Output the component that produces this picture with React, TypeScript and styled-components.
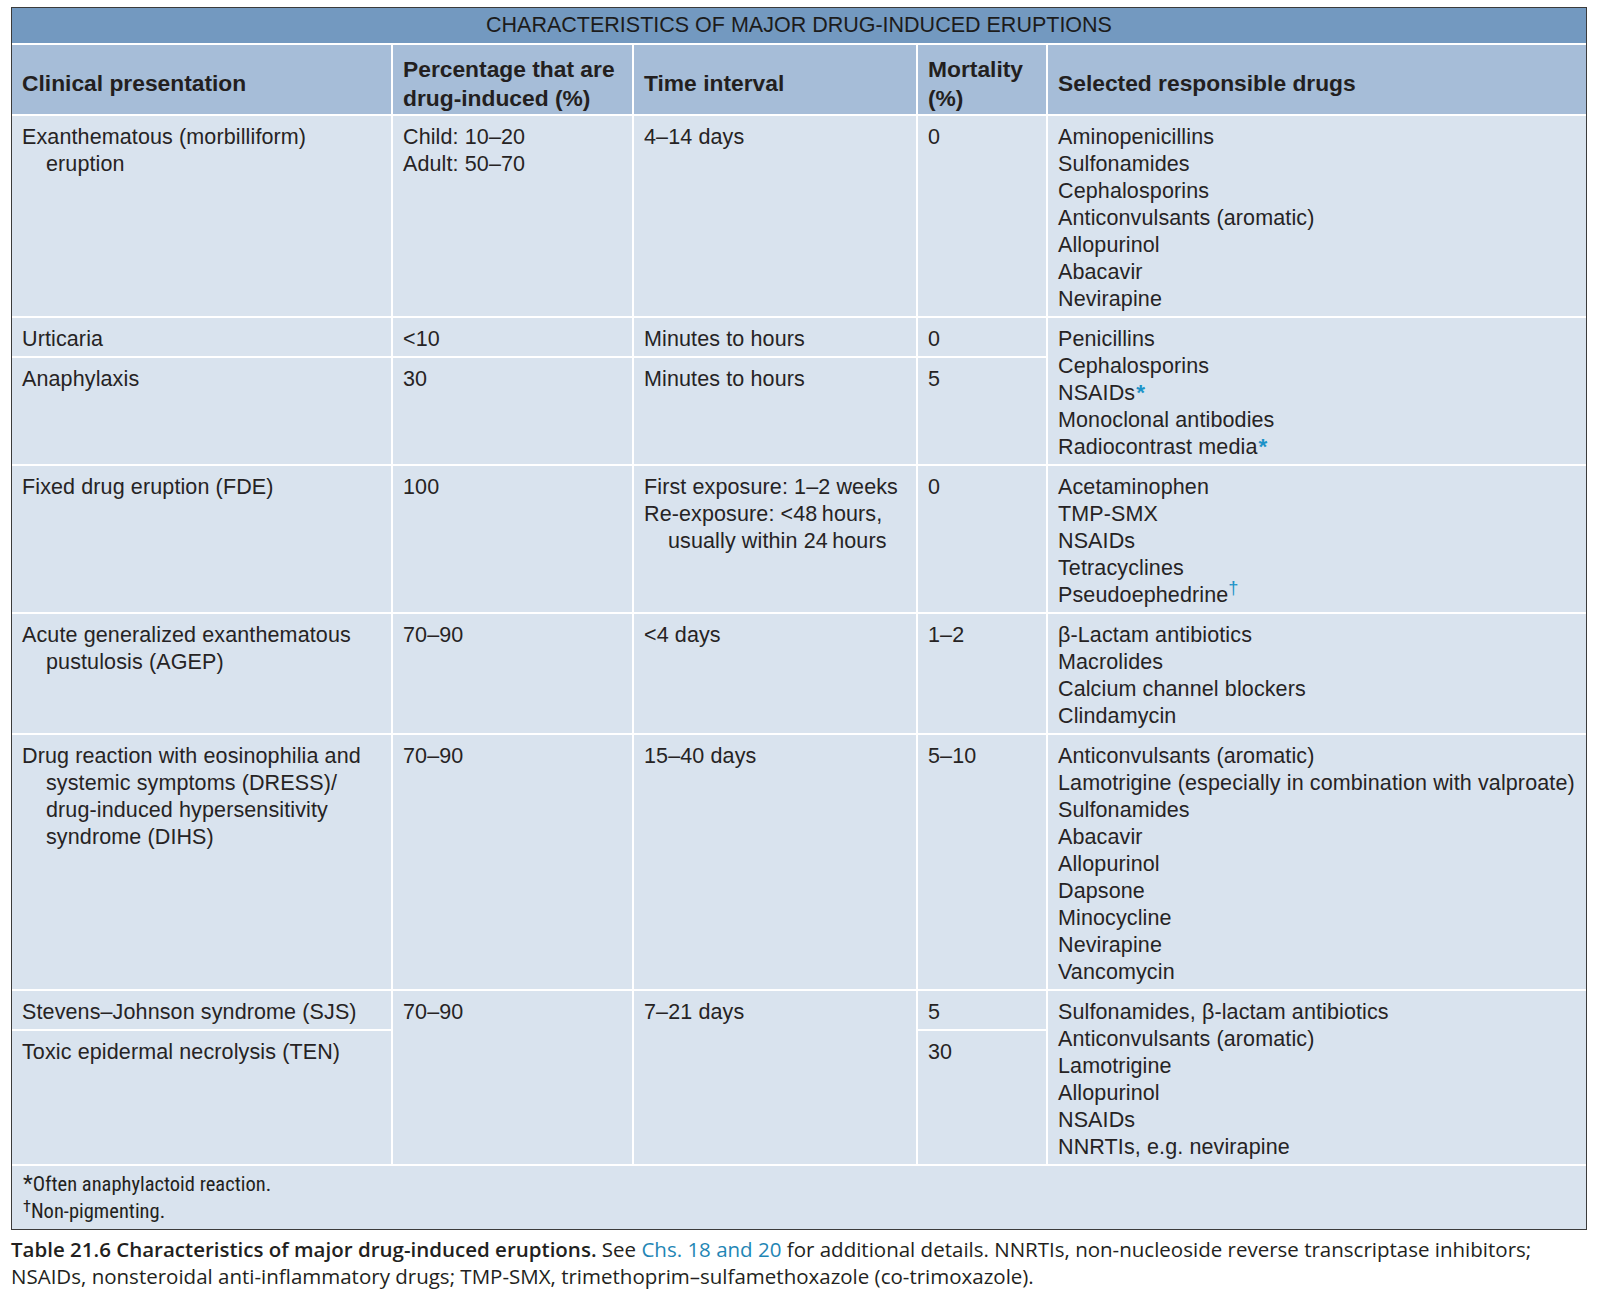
import React from "react";
import styled, { createGlobalStyle } from "styled-components";

const GlobalStyle = createGlobalStyle`
  html, body {
    margin: 0;
    padding: 0;
    background: #ffffff;
  }
  body {
    font-family: "Liberation Sans", Arial, sans-serif;
    color: #231f20;
  }
`;

const Page = styled.div`
  width: 1600px;
  box-sizing: border-box;
  padding: 7px 13px 0 11px;
`;

const Frame = styled.div`
  border: 1.5px solid #3b3b3b;
  background: #d9e3ee;
`;

const Table = styled.table`
  width: 100%;
  table-layout: fixed;
  border-collapse: collapse;
  border-style: hidden;
  font-family: "Liberation Sans", Arial, sans-serif;
`;

const Col = styled.col<{ $w?: number }>`
  width: ${(p) => (p.$w ? `${p.$w}px` : "auto")};
`;

const TitleCell = styled.th`
  height: 35px;
  padding: 0;
  background: #7399c0;
  border-bottom: 2px solid #ffffff;
  font-size: 21.5px;
  font-weight: 400;
  line-height: 35px;
  text-align: center;
  color: #1c1c1c;
`;

const HeadCell = styled.th`
  height: 71px;
  box-sizing: border-box;
  padding: 9px 10px 1px;
  background: #a6bdd8;
  border: 2px solid #ffffff;
  font-size: 22.8px;
  font-weight: 700;
  line-height: 29px;
  text-align: left;
  vertical-align: middle;
  white-space: nowrap;
  color: #231f20;
`;

const Row = styled.tr<{ $h?: number }>`
  height: ${(p) => (p.$h ? `${p.$h}px` : "auto")};
`;

const Cell = styled.td`
  padding: 8px 10px 3px;
  border: 2px solid #ffffff;
  vertical-align: top;
  font-size: 21.5px;
  line-height: 27px;
  letter-spacing: 0.12px;
  color: #262324;
`;

const Line = styled.div<{ $indent?: boolean }>`
  height: 27px;
  white-space: nowrap;
  padding-left: ${(p) => (p.$indent ? "24px" : "0")};
`;

const Star = styled.span`
  color: #1d93c8;
  font-weight: 700;
  font-size: 1.05em;
  line-height: 0;
  margin-left: 1px;
`;

const Dagger = styled.sup`
  color: #1d93c8;
  font-size: 0.85em;
  line-height: 0;
  vertical-align: 0.45em;
`;

const NoteCell = styled.td`
  padding: 5px 11px 4px;
  border: 2px solid #ffffff;
  font-family: "Liberation Sans Narrow", "Roboto Condensed", Roboto, sans-serif;
  font-size: 20.5px;
  line-height: 27px;
  color: #231f20;
`;

const NoteLine = styled.div`
  height: 27px;
  white-space: nowrap;
`;

const NoteStar = styled.span`
  font-size: 1.1em;
  line-height: 0;
`;

const NoteMark = styled.sup`
  font-size: 0.8em;
  line-height: 0;
  vertical-align: 0.35em;
`;

const Caption = styled.p`
  margin: 6px 0 0;
  font-family: "Open Sans", "Noto Sans", sans-serif;
  font-size: 20.5px;
  line-height: 27px;
  color: #231f20;
  white-space: nowrap;
`;

const CaptionTitle = styled.strong`
  font-weight: 600;
`;

const Ref = styled.span`
  color: #1f86b5;
`;

type Item = string | [string, "indent"] | React.ReactNode;

function Lines({ items }: { items: Item[] }) {
  return (
    <>
      {items.map((it, i) =>
        Array.isArray(it) ? (
          <Line key={i} $indent>
            {it[0]}
          </Line>
        ) : (
          <Line key={i}>{it}</Line>
        )
      )}
    </>
  );
}

export default function App() {
  return (
    <Page>
      <GlobalStyle />
      <Frame>
        <Table>
          <colgroup>
            <Col $w={380} />
            <Col $w={241} />
            <Col $w={284} />
            <Col $w={130} />
            <Col />
          </colgroup>
          <thead>
            <tr>
              <TitleCell colSpan={5}>CHARACTERISTICS OF MAJOR DRUG-INDUCED ERUPTIONS</TitleCell>
            </tr>
            <tr>
              <HeadCell>Clinical presentation</HeadCell>
              <HeadCell>
                Percentage that are
                <br />
                drug-induced (%)
              </HeadCell>
              <HeadCell>Time interval</HeadCell>
              <HeadCell>
                Mortality
                <br />
                (%)
              </HeadCell>
              <HeadCell>Selected responsible drugs</HeadCell>
            </tr>
          </thead>
          <tbody>
            <Row>
              <Cell>
                <Lines items={["Exanthematous (morbilliform)", ["eruption", "indent"]]} />
              </Cell>
              <Cell>
                <Lines items={["Child: 10–20", "Adult: 50–70"]} />
              </Cell>
              <Cell>4–14 days</Cell>
              <Cell>0</Cell>
              <Cell>
                <Lines
                  items={[
                    "Aminopenicillins",
                    "Sulfonamides",
                    "Cephalosporins",
                    "Anticonvulsants (aromatic)",
                    "Allopurinol",
                    "Abacavir",
                    "Nevirapine",
                  ]}
                />
              </Cell>
            </Row>
            <Row $h={38}>
              <Cell>Urticaria</Cell>
              <Cell>&lt;10</Cell>
              <Cell>Minutes to hours</Cell>
              <Cell>0</Cell>
              <Cell rowSpan={2}>
                <Lines
                  items={[
                    "Penicillins",
                    "Cephalosporins",
                    <>
                      NSAIDs<Star>*</Star>
                    </>,
                    "Monoclonal antibodies",
                    <>
                      Radiocontrast media<Star>*</Star>
                    </>,
                  ]}
                />
              </Cell>
            </Row>
            <Row $h={108}>
              <Cell>Anaphylaxis</Cell>
              <Cell>30</Cell>
              <Cell>Minutes to hours</Cell>
              <Cell>5</Cell>
            </Row>
            <Row>
              <Cell>Fixed drug eruption (FDE)</Cell>
              <Cell>100</Cell>
              <Cell>
                <Lines
                  items={[
                    "First exposure: 1–2 weeks",
                    "Re-exposure: <48\u2009hours,",
                    ["usually within 24\u2009hours", "indent"],
                  ]}
                />
              </Cell>
              <Cell>0</Cell>
              <Cell>
                <Lines
                  items={[
                    "Acetaminophen",
                    "TMP-SMX",
                    "NSAIDs",
                    "Tetracyclines",
                    <>
                      Pseudoephedrine<Dagger>†</Dagger>
                    </>,
                  ]}
                />
              </Cell>
            </Row>
            <Row>
              <Cell>
                <Lines items={["Acute generalized exanthematous", ["pustulosis (AGEP)", "indent"]]} />
              </Cell>
              <Cell>70–90</Cell>
              <Cell>&lt;4 days</Cell>
              <Cell>1–2</Cell>
              <Cell>
                <Lines
                  items={["β-Lactam antibiotics", "Macrolides", "Calcium channel blockers", "Clindamycin"]}
                />
              </Cell>
            </Row>
            <Row>
              <Cell>
                <Lines
                  items={[
                    "Drug reaction with eosinophilia and",
                    ["systemic symptoms (DRESS)/", "indent"],
                    ["drug-induced hypersensitivity", "indent"],
                    ["syndrome (DIHS)", "indent"],
                  ]}
                />
              </Cell>
              <Cell>70–90</Cell>
              <Cell>15–40 days</Cell>
              <Cell>5–10</Cell>
              <Cell>
                <Lines
                  items={[
                    "Anticonvulsants (aromatic)",
                    "Lamotrigine (especially in combination with valproate)",
                    "Sulfonamides",
                    "Abacavir",
                    "Allopurinol",
                    "Dapsone",
                    "Minocycline",
                    "Nevirapine",
                    "Vancomycin",
                  ]}
                />
              </Cell>
            </Row>
            <Row $h={39}>
              <Cell>Stevens–Johnson syndrome (SJS)</Cell>
              <Cell rowSpan={2}>70–90</Cell>
              <Cell rowSpan={2}>7–21 days</Cell>
              <Cell>5</Cell>
              <Cell rowSpan={2}>
                <Lines
                  items={[
                    "Sulfonamides, β-lactam antibiotics",
                    "Anticonvulsants (aromatic)",
                    "Lamotrigine",
                    "Allopurinol",
                    "NSAIDs",
                    "NNRTIs, e.g. nevirapine",
                  ]}
                />
              </Cell>
            </Row>
            <Row $h={134}>
              <Cell>Toxic epidermal necrolysis (TEN)</Cell>
              <Cell>30</Cell>
            </Row>
            <tr>
              <NoteCell colSpan={5}>
                <NoteLine>
                  <NoteStar>*</NoteStar>Often anaphylactoid reaction.
                </NoteLine>
                <NoteLine>
                  <NoteMark>†</NoteMark>Non-pigmenting.
                </NoteLine>
              </NoteCell>
            </tr>
          </tbody>
        </Table>
      </Frame>
      <Caption>
        <CaptionTitle>Table 21.6 Characteristics of major drug-induced eruptions.</CaptionTitle> See{" "}
        <Ref>Chs. 18 and 20</Ref> for additional details. NNRTIs, non-nucleoside reverse transcriptase inhibitors;
        <br />
        NSAIDs, nonsteroidal anti-inflammatory drugs; TMP-SMX, trimethoprim–sulfamethoxazole (co-trimoxazole).
      </Caption>
    </Page>
  );
}
